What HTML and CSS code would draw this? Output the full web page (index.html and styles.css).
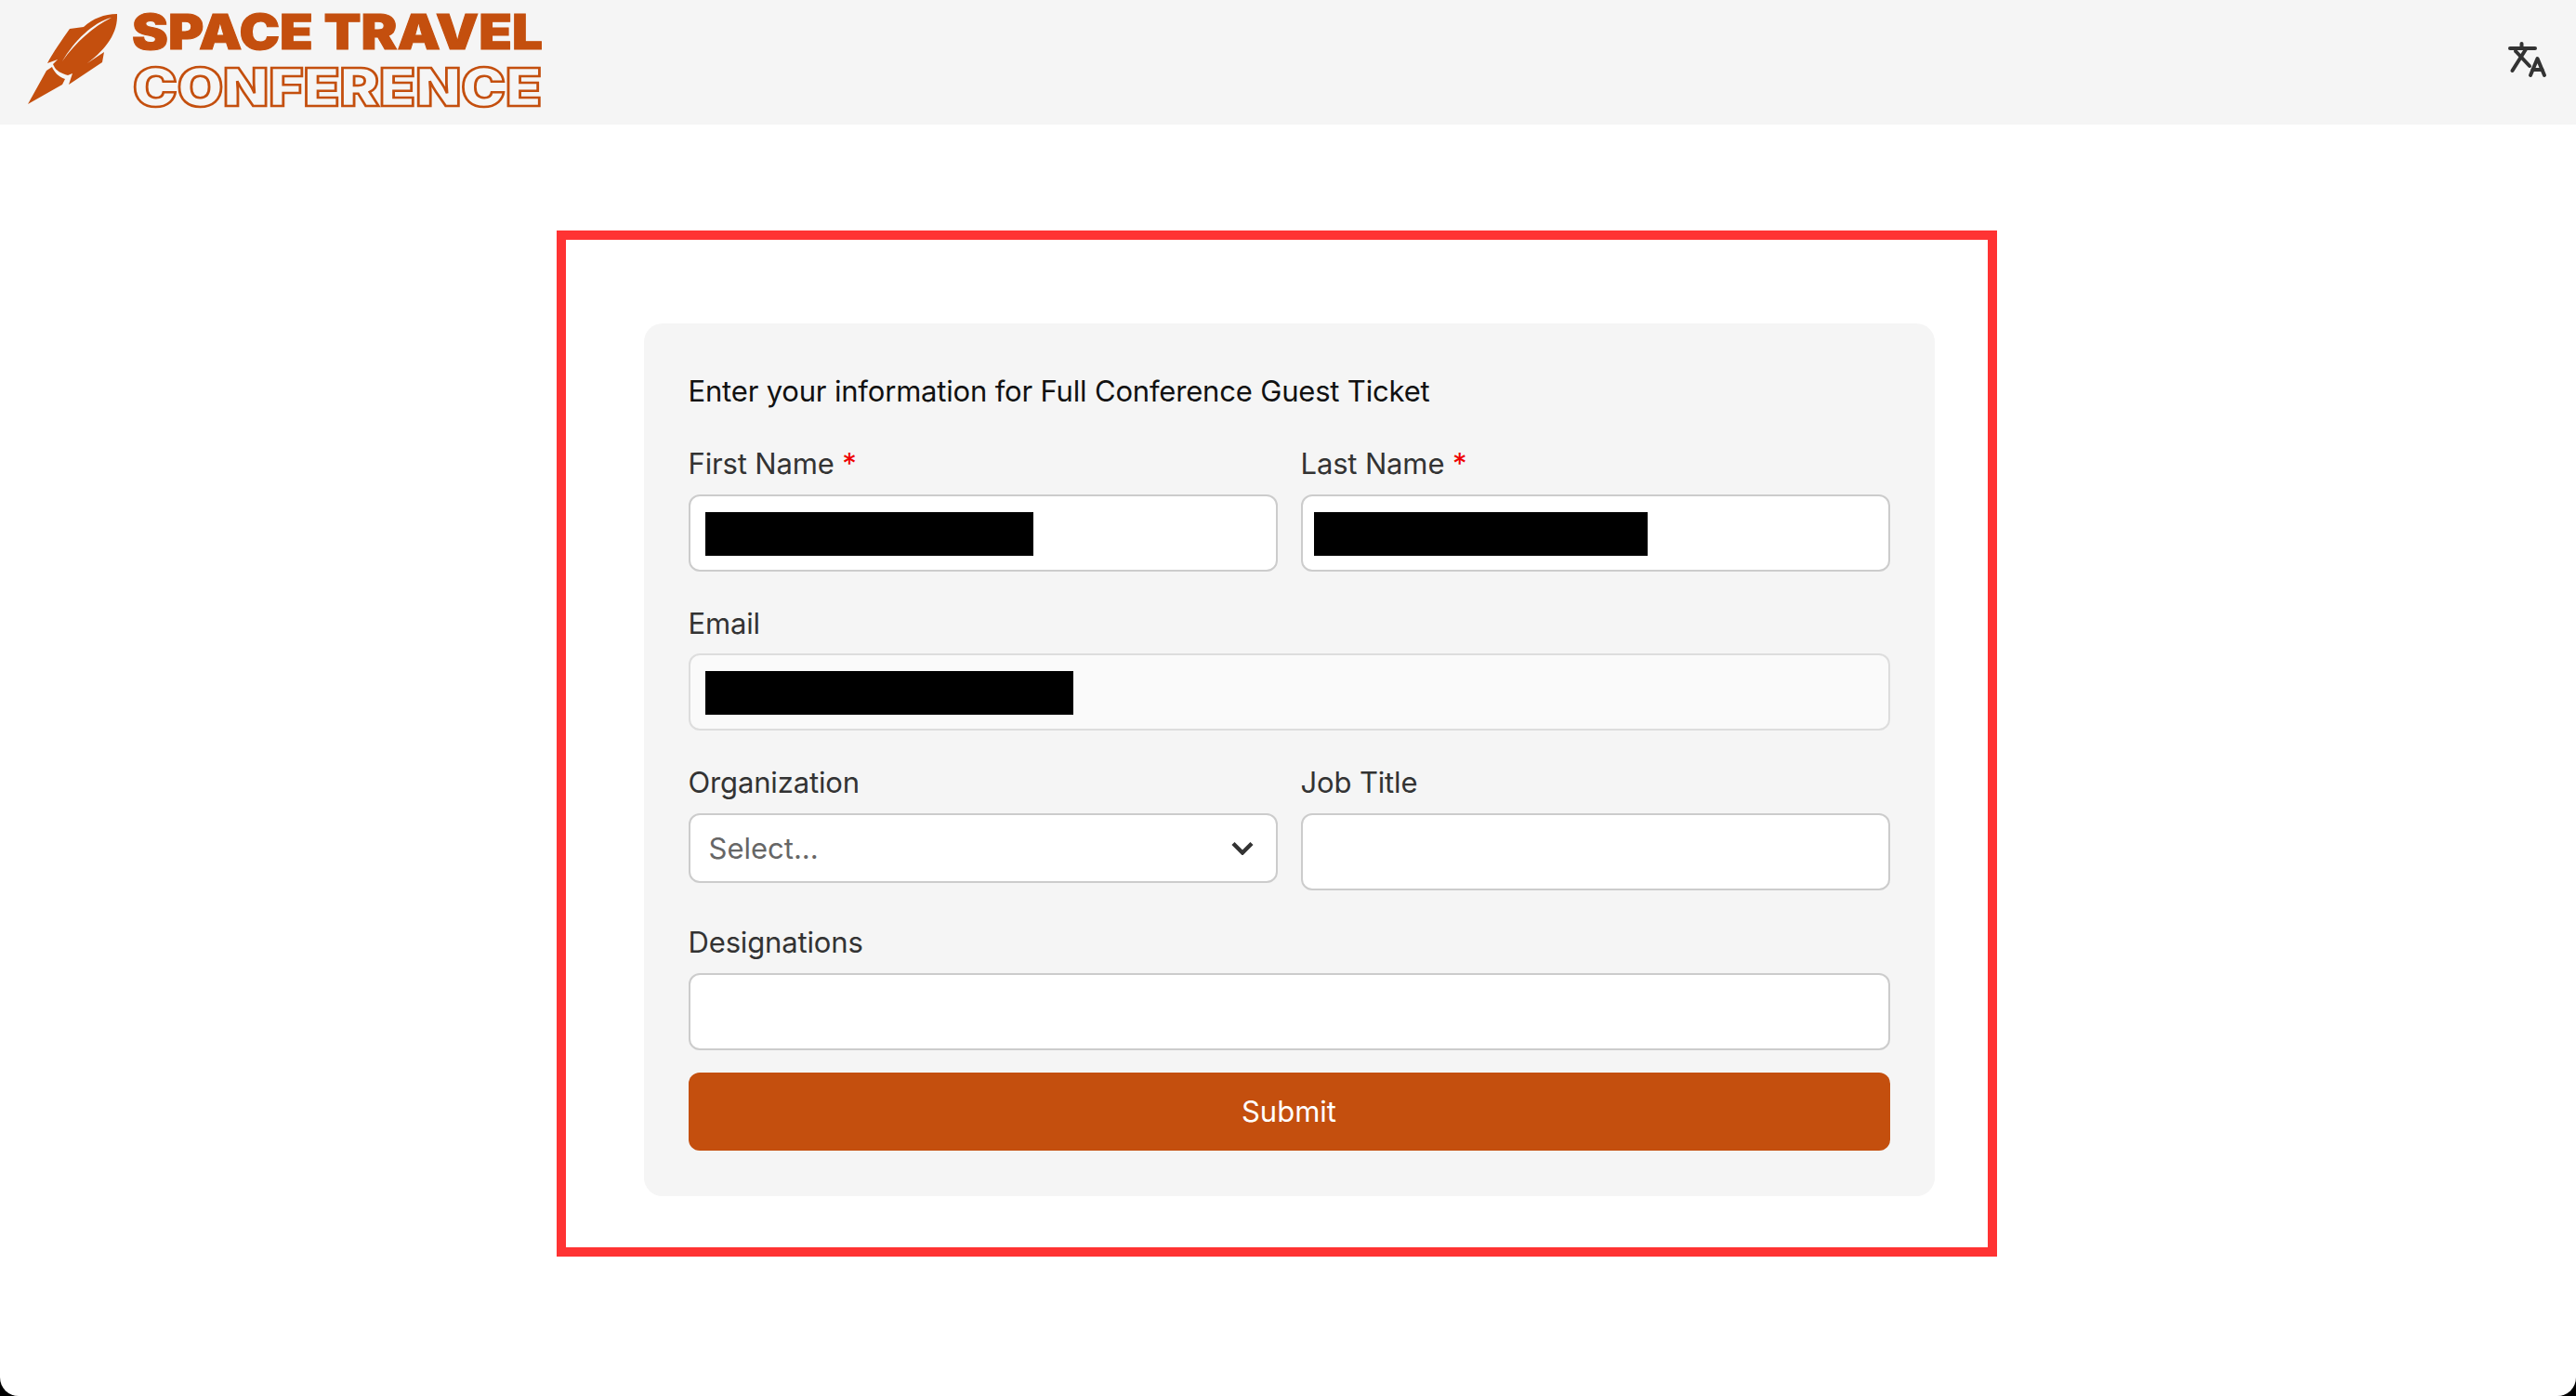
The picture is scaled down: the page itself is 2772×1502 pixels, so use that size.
FILE: index.html
```html
<!DOCTYPE html>
<html>
    <head>
        <meta charset="UTF-8">
        <title>Space Travel Conference</title>
        <link rel="stylesheet" href="styles.css">
    </head>
    <body>
        <header class="topbar">
            <svg class="logo" viewBox="0 0 600 134" width="600" height="134">
                <path class="logo-mark" d="M126 15C112 15 100 20 90 29L75 31C68 41 56 58 51 68L62 64L57 69L58 71C60 76 66 79 73 81L78 79L74 91L110 67L112 56L94 68C115 52 127 35 126 15Z"/>
                <path class="logo-mark" d="M56 72L50 76L30 112L67 91L70 85C63 83 58 77 56 72Z"/>
                <path class="logo-shine" d="M120 19C100 24 80 44 67 66C82 45 100 29 120 19Z"/>
                <text class="logo-top" x="142" y="53" textLength="442" lengthAdjust="spacingAndGlyphs">SPACE TRAVEL</text>
                <text class="logo-bottom" x="143" y="114" textLength="440" lengthAdjust="spacingAndGlyphs">CONFERENCE</text>
            </svg>
            <svg class="lang-icon" viewBox="0 0 46 46" width="46" height="46" fill="none" stroke="#333" stroke-width="4" stroke-linecap="round" stroke-linejoin="round">
                <path d="M4 9H31"/>
                <path d="M16.5 4V9"/>
                <path d="M10 12L25 28"/>
                <path d="M21 10L6.5 33"/>
                <path d="M26 38L33.5 20L41 38"/>
                <path d="M28.5 32H38.5"/>
            </svg>
        </header>
        <main class="content">
            <form class="card">
                <p class="intro">Enter your information for Full Conference Guest Ticket</p>
                <div class="row">
                    <div class="field">
                        <label>First Name <span class="req">*</span></label>
                        <div class="input-wrap">
                            <input type="text">
                            <span class="redact redact-first"></span>
                        </div>
                    </div>
                    <div class="field">
                        <label>Last Name <span class="req">*</span></label>
                        <div class="input-wrap">
                            <input type="text">
                            <span class="redact redact-last"></span>
                        </div>
                    </div>
                </div>
                <div class="field">
                    <label>Email</label>
                    <div class="input-wrap">
                        <input type="text" class="readonly" readonly>
                        <span class="redact redact-email"></span>
                    </div>
                </div>
                <div class="row">
                    <div class="field">
                        <label>Organization</label>
                        <div class="input-wrap">
                            <select>
                                <option>Select...</option>
                            </select>
                            <svg class="chevron" viewBox="0 0 24 15" width="24" height="15" fill="none" stroke="#333" stroke-width="4.4">
                                <path d="M2 2.5l10 10 10-10"/>
                            </svg>
                        </div>
                    </div>
                    <div class="field">
                        <label>Job Title</label>
                        <div class="input-wrap">
                            <input type="text">
                        </div>
                    </div>
                </div>
                <div class="field">
                    <label>Designations</label>
                    <div class="input-wrap">
                        <input type="text">
                    </div>
                </div>
                <button type="button" class="submit-btn">Submit</button>
            </form>
        </main>
        <div class="highlight"></div>
    </body>
</html>
```

FILE: styles.css
```css
html {
    background-color: #000;
}
body {
    margin: 0;
    height: 1502px;
    overflow: hidden;
    position: relative;
    background-color: #fff;
    border-radius: 0 0 20px 20px;
    font-family: Inter, "Liberation Sans", sans-serif;
    color: #333;
}
.topbar {
    height: 134px;
    background-color: #f5f5f5;
    display: flex;
    justify-content: space-between;
    align-items: center;
    padding-right: 29px;
}
.logo {
    display: block;
}
.logo-mark {
    fill: #c44f0e;
}
.logo-shine {
    fill: #f5f5f5;
}
.logo-top {
    font-family: Inter, sans-serif;
    font-weight: 900;
    font-size: 52px;
    fill: #c44f0e;
    stroke: #c44f0e;
    stroke-width: 1;
}
.logo-bottom {
    font-family: Inter, sans-serif;
    font-weight: 900;
    font-size: 57px;
    fill: none;
    stroke: #c44f0e;
    stroke-width: 2.5;
}
.lang-icon {
    margin-top: -2px;
}
.content {
    padding: 214px 0 0 2px;
}
.card {
    box-sizing: border-box;
    width: 1389px;
    height: 939px;
    margin: 0 auto;
    padding: 48px;
    background-color: #f5f5f5;
    border-radius: 20px;
}
.intro {
    margin: 0;
    height: 71px;
    line-height: 50px;
    font-size: 31px;
    letter-spacing: -0.18px;
    color: #111;
}
.row {
    display: grid;
    grid-template-columns: 1fr 1fr;
    gap: 25px;
}
.field {
    margin-bottom: 24px;
}
.field label {
    display: block;
    height: 64.7px;
    line-height: 64px;
    font-size: 31px;
    letter-spacing: -0.15px;
}
.req {
    color: #e00;
}
.input-wrap {
    position: relative;
}
.input-wrap input {
    display: block;
    box-sizing: border-box;
    width: 100%;
    height: 83px;
    background-color: #fff;
    border: 2px solid #ccc;
    border-radius: 12px;
    outline: none;
}
.input-wrap input.readonly {
    background-color: #fafafa;
    border-color: #ddd;
}
.input-wrap select {
    display: block;
    box-sizing: border-box;
    width: 100%;
    height: 75px;
    padding-left: 20px;
    appearance: none;
    background-color: #fff;
    border: 2px solid #ccc;
    border-radius: 12px;
    font-family: Inter, sans-serif;
    font-size: 31px;
    color: #666;
}
.chevron {
    position: absolute;
    top: 30px;
    right: 26px;
}
.redact {
    position: absolute;
    top: 19px;
    left: 18px;
    height: 47px;
    background-color: #000;
}
.redact-first {
    width: 353px;
}
.redact-last {
    width: 359px;
    left: 14px;
}
.redact-email {
    width: 396px;
}
.submit-btn {
    display: block;
    width: 100%;
    height: 84px;
    margin-top: 1px;
    border: none;
    border-radius: 12px;
    background-color: #c44f0e;
    color: #fff;
    font-family: Inter, sans-serif;
    font-size: 31px;
}
.highlight {
    position: absolute;
    left: 599px;
    top: 248px;
    box-sizing: border-box;
    width: 1550px;
    height: 1104px;
    border: 10px solid #ff3333;
}
```
